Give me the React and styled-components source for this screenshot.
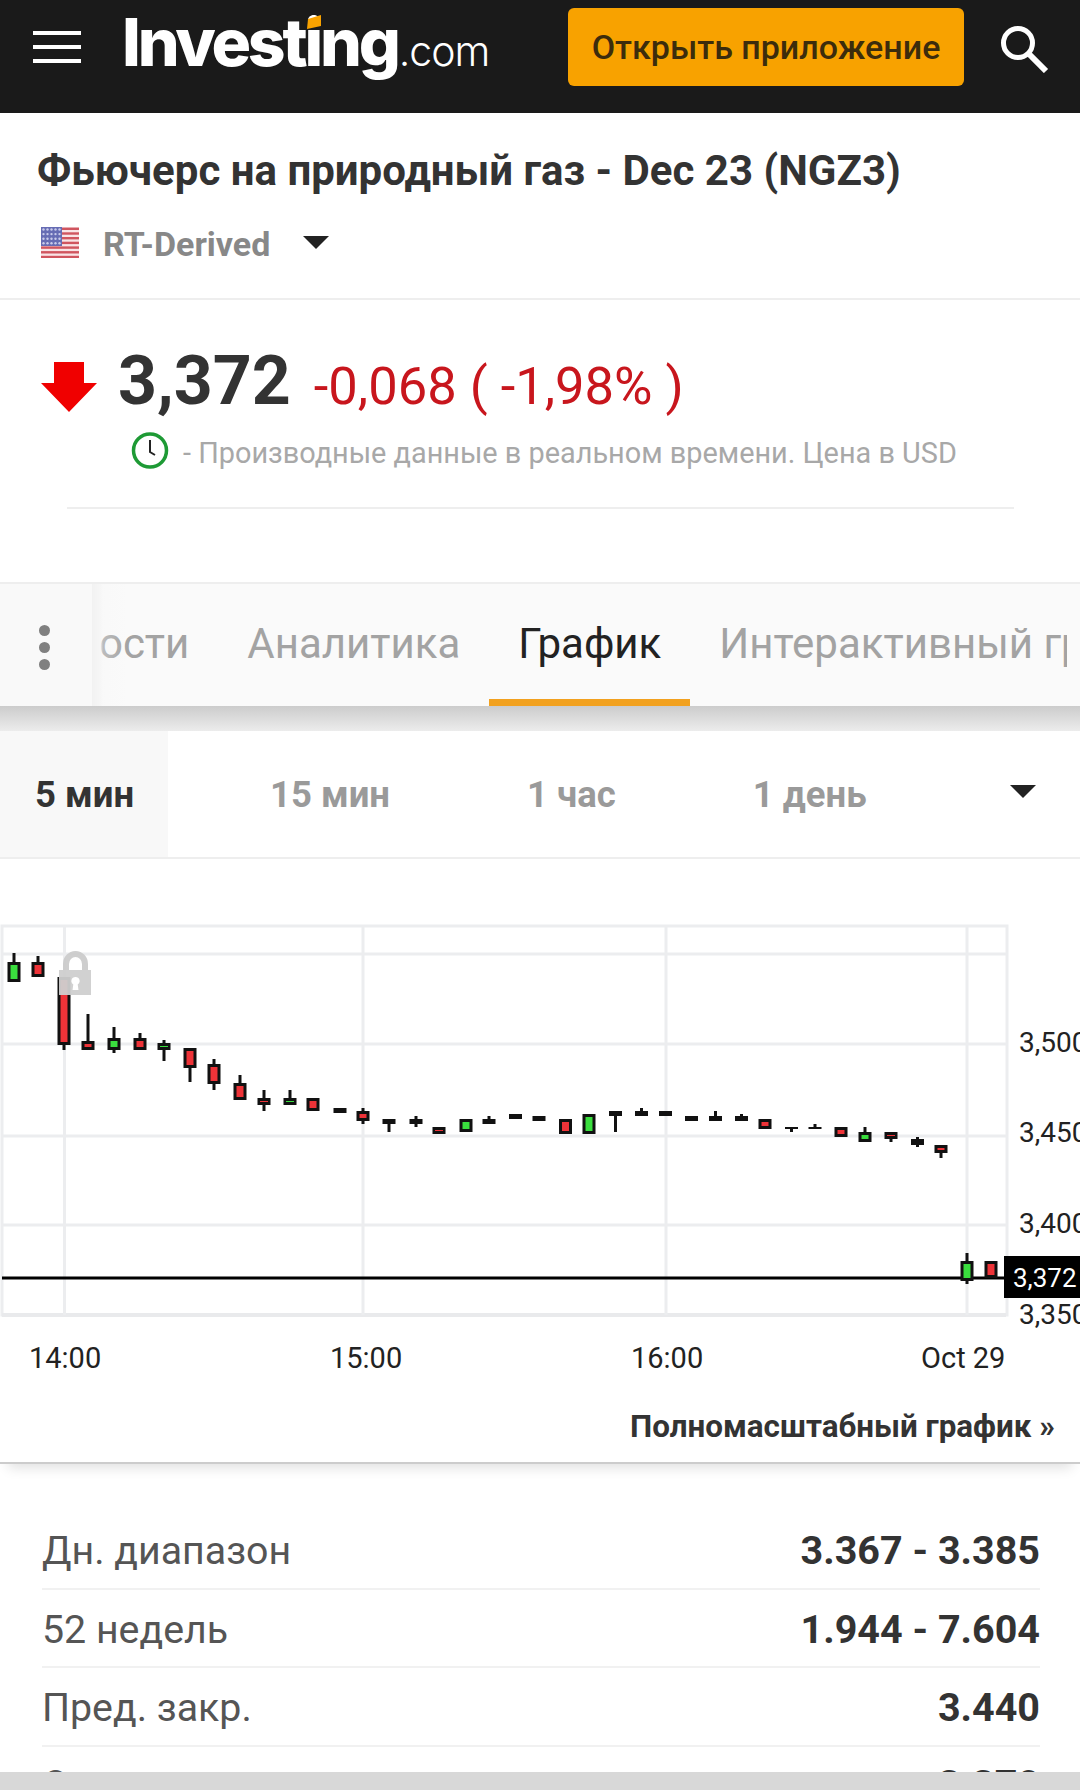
import React from 'react';
import styled, { createGlobalStyle } from 'styled-components';

const GlobalStyle = createGlobalStyle`
  html, body { margin: 0; padding: 0; background: #fff; }
  body { width: 1080px; height: 1790px; overflow: hidden; font-family: Roboto, "Liberation Sans", sans-serif; color: #333; }
  * { box-sizing: border-box; }
`;

const Page = styled.div`
  position: relative;
  width: 1080px;
  height: 1790px;
  overflow: hidden;
`;

const Header = styled.header`
  display: flex;
  align-items: flex-start;
  height: 113px;
  padding: 8px 31px 0 33px;
  background: #1a1a1a;
`;

const Burger = styled.div`
  display: flex;
  flex-direction: column;
  gap: 10px;
  width: 48px;
  margin-top: 23px;
  span { display: block; height: 4px; background: #fff; }
`;

const Logo = styled.div`
  position: relative;
  display: flex;
  align-items: baseline;
  margin-left: 41px;
  height: 90px;
  line-height: 69px;
  color: #fff;
  font-family: Inter, Roboto, sans-serif;
`;

const LogoMain = styled.span`
  font-size: 66px;
  font-weight: 800;
  letter-spacing: -3.2px;
`;

const LogoCom = styled.span`
  margin-left: 1px;
  font-size: 41px;
  font-weight: 300;
  letter-spacing: -1px;
`;

const LogoAccent = styled.svg`
  position: absolute;
  left: 185px;
  top: 7px;
`;

const AppButton = styled.button`
  width: 396px;
  height: 78px;
  margin-left: auto;
  border: 0;
  border-radius: 6px;
  background: #f8a200;
  color: #3c2c0c;
  font-family: inherit;
  font-size: 34px;
  font-weight: 500;
  white-space: nowrap;
`;

const SearchIcon = styled.svg`
  margin: 17px 0 0 36px;
`;

const TitleBlock = styled.section`
  height: 187px;
  padding: 34px 0 0 37px;
  border-bottom: 2px solid #eee;
`;

const Title = styled.h1`
  margin: 0;
  font-size: 42px;
  line-height: 48px;
  font-weight: 700;
  color: #333;
  white-space: nowrap;
`;

const ExchangeRow = styled.div`
  display: flex;
  align-items: center;
  margin: 32px 0 0 4px;
  height: 30px;
`;

const Exchange = styled.span`
  margin: 3px 0 0 24px;
  font-size: 34px;
  font-weight: 700;
  color: #888;
`;

const Caret = styled.span`
  display: block;
  width: 0;
  height: 0;
  margin-left: ${p => p.$gap || 0}px;
  border-left: ${p => p.$half}px solid transparent;
  border-right: ${p => p.$half}px solid transparent;
  border-top: 13px solid #222;
`;

const QuoteBlock = styled.section`
  height: 282px;
  padding-top: 45px;
`;

const PriceRow = styled.div`
  display: flex;
  align-items: baseline;
  height: 72px;
  padding-left: 41px;
`;

const DownArrow = styled.svg`
  align-self: flex-start;
  margin-top: 17px;
`;

const Price = styled.span`
  margin-left: 21px;
  font-size: 68px;
  line-height: 72px;
  font-weight: 700;
  color: #333;
`;

const Change = styled.span`
  margin-left: 23px;
  font-size: 52.5px;
  line-height: 72px;
  color: #c8161d;
`;

const Note = styled.div`
  display: flex;
  align-items: center;
  margin: 15px 0 0 131px;
  height: 36px;
  font-size: 28.87px;
  color: #a8a8a8;
  white-space: nowrap;
  svg { margin-right: 14px; }
  span { padding-top: 6px; }
`;

const Rule = styled.div`
  margin: 39px 66px 0 67px;
  height: 2px;
  background: #eee;
`;

const TabStrip = styled.nav`
  position: relative;
  height: 124px;
  overflow: hidden;
  border-top: 2px solid #eee;
  background: #fafafa;
`;

const TabViewport = styled.div`
  width: 1067px;
  overflow: hidden;
`;

const TabRow = styled.div`
  display: flex;
  margin-left: ${p => p.$shift}px;
`;

const Tab = styled.div`
  flex: none;
  height: 122px;
  padding: 33px 29px 0;
  font-size: 42px;
  line-height: 54px;
  white-space: nowrap;
  color: ${p => (p.$active ? '#222' : '#a3a3a3')};
  border-bottom: 7px solid ${p => (p.$active ? '#f2a11f' : 'transparent')};
`;

const SideButton = styled.div`
  position: absolute;
  left: 0;
  top: 0;
  width: 92px;
  height: 122px;
  display: flex;
  flex-direction: column;
  gap: 6px;
  padding: 41px 0 0 39px;
  background: #f9f9f9;
  span { display: block; width: 11px; height: 11px; border-radius: 50%; background: #808080; }
  &::after {
    content: '';
    position: absolute;
    left: 100%;
    top: 0;
    bottom: 0;
    width: 36px;
    background: linear-gradient(to right, #f2f2f2 0, #f6f6f6 8px, rgba(246, 246, 246, 0.3) 11px, rgba(250, 250, 250, 0) 100%);
  }
`;

const TabShadow = styled.div`
  height: 25px;
  background: linear-gradient(#cccccc, #ececec);
`;

const RangeRow = styled.div`
  display: flex;
  height: 128px;
  border-bottom: 2px solid #eee;
  font-size: 36.5px;
  font-weight: 700;
  line-height: 128px;
`;

const ActiveRange = styled.div`
  flex: none;
  width: 168px;
  padding-left: 35px;
  background: #f8f8f8;
  color: #333;
`;

const RangeList = styled.div`
  display: flex;
  gap: 137px;
  margin-left: 102px;
`;

const Range = styled.div`
  color: #9a9a9a;
`;

const RangeCaret = styled.div`
  margin: 54px 0 0 auto;
  padding-right: 44px;
`;

const ChartCard = styled.section`
  position: relative;
  height: 605px;
  border-bottom: 2px solid #ccc;
  box-shadow: 0 12px 12px -8px rgba(0, 0, 0, 0.12);
`;

const Canvas = styled.div`
  position: relative;
  width: 1080px;
  height: 540px;
  overflow: hidden;
`;

const AxisY = styled.span`
  position: absolute;
  left: 1019px;
  font-size: 28px;
  line-height: 32px;
  color: #222;
`;

const PriceTag = styled.span`
  position: absolute;
  left: 1004px;
  top: 397px;
  width: 76px;
  height: 42px;
  padding-left: 9px;
  background: #000;
  color: #fff;
  font-size: 26px;
  line-height: 44px;
`;

const AxisX = styled.span`
  position: absolute;
  top: 483px;
  font-size: 29px;
  line-height: 32px;
  color: #222;
`;

const FullLink = styled.div`
  padding: 8px 25px 0 0;
  text-align: right;
  font-size: 31.4px;
  font-weight: 700;
  line-height: 40px;
  color: #333;
`;

const Stats = styled.section`
  margin: 0 40px 0 42px;
  padding-top: 47px;
`;

const StatRow = styled.div`
  display: flex;
  justify-content: space-between;
  height: 78.5px;
  padding-top: ${p => (p.$tight ? 14 : 16)}px;
  border-bottom: 2px solid #f1f1f1;
  line-height: 48px;
`;

const StatLabel = styled.span`
  font-size: 39.3px;
  color: #555;
`;

const StatValue = styled.span`
  font-size: 39.5px;
  font-weight: 700;
  color: #333;
`;

const BottomBar = styled.div`
  position: absolute;
  left: 0;
  right: 0;
  bottom: 0;
  height: 18px;
  background: #d8d8d8;
`;

// x, wick top, body top, body bottom, wick bottom, colour (g/r/k)
const CANDLES = [
  [14, 953, 962, 982, 982, 'g'], [38, 956, 962, 977, 977, 'r'], [64, 977, 977, 1045, 1050, 'r'],
  [88, 1014, 1041, 1050, 1050, 'r'], [114, 1027, 1038, 1050, 1053, 'g'], [140, 1033, 1038, 1050, 1050, 'r'],
  [164, 1040, 1043, 1050, 1061, 'g'], [190, 1048, 1048, 1068, 1082, 'r'], [214, 1059, 1064, 1084, 1090, 'r'],
  [240, 1075, 1083, 1100, 1100, 'r'], [264, 1090, 1098, 1105, 1111, 'r'], [290, 1090, 1098, 1105, 1105, 'g'],
  [313, 1098, 1098, 1111, 1111, 'r'], [340, 1108, 1108, 1113, 1113, 'k'], [363, 1108, 1111, 1121, 1124, 'r'],
  [389, 1119, 1119, 1124, 1132, 'k'], [416, 1116, 1119, 1124, 1127, 'k'], [439, 1127, 1127, 1134, 1134, 'r'],
  [466, 1119, 1119, 1132, 1132, 'g'], [489, 1116, 1119, 1124, 1124, 'k'], [515.5, 1114, 1114, 1119, 1119, 'k'],
  [539, 1116, 1116, 1121, 1121, 'k'], [565.5, 1119, 1119, 1134, 1134, 'r'], [589, 1114, 1114, 1134, 1134, 'g'],
  [615.5, 1111, 1111, 1116, 1132, 'k'], [641.5, 1108, 1111, 1116, 1116, 'k'], [665.5, 1111, 1111, 1116, 1116, 'k'],
  [691.5, 1116, 1116, 1121, 1121, 'k'], [715.5, 1111, 1116, 1121, 1121, 'k'], [741.5, 1114, 1116, 1121, 1121, 'k'],
  [765, 1119, 1119, 1129, 1129, 'r'], [791.5, 1127, 1127, 1129, 1132, 'k'], [815, 1124, 1127, 1129, 1129, 'k'],
  [841, 1127, 1127, 1137, 1137, 'r'], [865, 1127, 1132, 1142, 1142, 'g'], [891, 1132, 1132, 1139, 1142, 'r'],
  [917.5, 1137, 1139, 1145, 1147, 'k'], [941, 1145, 1145, 1153, 1158, 'r'], [967, 1253, 1261, 1281, 1284, 'g'],
  [991, 1261, 1261, 1278, 1278, 'r'],
];

const FILL = { g: '#3ade3e', r: '#ee3338' };
const GRID_X = [64.5, 363, 666, 967];
const GRID_Y = [954, 1044, 1136, 1225];

function Candle({ c }) {
  const [x, wt, bt, bb, wb, kind] = c;
  return (
    <g>
      <line x1={x} x2={x} y1={wt} y2={wb} stroke="#111" strokeWidth="3" />
      {kind === 'k'
        ? <rect x={x - 6.5} y={bt} width="13" height={bb - bt} fill="#111" />
        : <rect x={x - 5} y={bt + 1.5} width="10" height={bb - bt - 3} fill={FILL[kind]} stroke="#111" strokeWidth="3" />}
    </g>
  );
}

function CandleChart() {
  return (
    <svg width="1080" height="540" viewBox="0 859 1080 540">
      <rect x="2" y="926" width="1005" height="389" fill="#fff" stroke="#ecedef" strokeWidth="3" />
      <line x1="2" x2="1006" y1="1315" y2="1315" stroke="#e9eaec" strokeWidth="4" />
      {GRID_X.map(x => <line key={x} x1={x} x2={x} y1="926" y2="1315" stroke="#ecedef" strokeWidth="3" />)}
      {GRID_Y.map(y => <line key={y} x1="2" x2="1006" y1={y} y2={y} stroke="#ecedef" strokeWidth="3" />)}
      <line x1="2" x2="1006" y1="1278" y2="1278" stroke="#000" strokeWidth="3" />
      {CANDLES.map(c => <Candle key={c[0]} c={c} />)}
      <g opacity="0.95">
        <path d="M66 971v-6a9.5 10 0 0 1 19 0v6" fill="none" stroke="#ccc" strokeWidth="6" transform="translate(0 -1)" />
        <rect x="59" y="970" width="32" height="25" fill="#cfcfcf" />
        <path d="M75.5 977a4 4 0 0 1 2.2 7.4l.8 5.6h-6l.8-5.6a4 4 0 0 1 2.2-7.4z" fill="#fff" />
      </g>
    </svg>
  );
}

function UsFlag() {
  const dots = [];
  for (let row = 0; row < 4; row++) {
    for (let col = 0; col < 5; col++) {
      dots.push(<circle key={`${row}-${col}`} cx={2.5 + col * 4} cy={2.5 + row * 4.6} r="1.2" fill="#c9cbea" />);
    }
  }
  return (
    <svg width="38" height="31" viewBox="0 0 38 31">
      <rect width="38" height="31" fill="#f9e4e6" />
      {[0, 1, 2, 3, 4, 5, 6].map(i => <rect key={i} y={i * 4.7 + 0.6} width="38" height="2.4" fill="#d0555f" />)}
      <rect width="21" height="19" fill="#666cb4" />
      {dots}
    </svg>
  );
}

export default function App() {
  return (
    <Page>
      <GlobalStyle />
      <Header>
        <Burger><span /><span /><span /></Burger>
        <Logo>
          <LogoMain>Investing</LogoMain>
          <LogoCom>.com</LogoCom>
          <LogoAccent width="14" height="14" viewBox="0 0 14 14">
            <path d="M1 4 14 0v11L0 14z" fill="#f8a200" />
          </LogoAccent>
        </Logo>
        <AppButton>Открыть приложение</AppButton>
        <SearchIcon width="49" height="48" viewBox="0 0 49 48">
          <circle cx="18" cy="18" r="14.5" fill="none" stroke="#fff" strokeWidth="5" />
          <path d="M28 28 46 46" stroke="#fff" strokeWidth="6" />
        </SearchIcon>
      </Header>

      <TitleBlock>
        <Title>Фьючерс на природный газ - Dec 23 (NGZ3)</Title>
        <ExchangeRow>
          <UsFlag />
          <Exchange>RT-Derived</Exchange>
          <Caret $half={13} $gap={33} />
        </ExchangeRow>
      </TitleBlock>

      <QuoteBlock>
        <PriceRow>
          <DownArrow width="56" height="50" viewBox="0 0 56 50">
            <path d="M13 0h30v21h13L28 50 0 21h13z" fill="#f00000" />
          </DownArrow>
          <Price>3,372</Price>
          <Change>-0,068 ( -1,98% )</Change>
        </PriceRow>
        <Note>
          <svg width="38" height="37" viewBox="0 0 38 37">
            <circle cx="19" cy="18.5" r="16.5" fill="none" stroke="#1e9a35" strokeWidth="3.5" />
            <path d="M19 8v12l5 3" fill="none" stroke="#222" strokeWidth="2" />
          </svg>
          <span>- Производные данные в реальном времени. Цена в USD</span>
        </Note>
        <Rule />
      </QuoteBlock>

      <TabStrip>
        <TabViewport>
          <TabRow $shift={-8}>
            <Tab>Новости</Tab>
            <Tab>Аналитика</Tab>
            <Tab $active>График</Tab>
            <Tab>Интерактивный график</Tab>
          </TabRow>
        </TabViewport>
        <SideButton><span /><span /><span /></SideButton>
      </TabStrip>
      <TabShadow />

      <RangeRow>
        <ActiveRange>5 мин</ActiveRange>
        <RangeList>
          <Range>15 мин</Range>
          <Range>1 час</Range>
          <Range>1 день</Range>
        </RangeList>
        <RangeCaret><Caret $half={13} /></RangeCaret>
      </RangeRow>

      <ChartCard>
        <Canvas>
          <CandleChart />
          <AxisY style={{ top: 168 }}>3,500</AxisY>
          <AxisY style={{ top: 258 }}>3,450</AxisY>
          <AxisY style={{ top: 349 }}>3,400</AxisY>
          <AxisY style={{ top: 440 }}>3,350</AxisY>
          <PriceTag>3,372</PriceTag>
          <AxisX style={{ left: 29 }}>14:00</AxisX>
          <AxisX style={{ left: 330 }}>15:00</AxisX>
          <AxisX style={{ left: 631 }}>16:00</AxisX>
          <AxisX style={{ left: 921 }}>Oct 29</AxisX>
        </Canvas>
        <FullLink>Полномасштабный график »</FullLink>
      </ChartCard>

      <Stats>
        <StatRow><StatLabel>Дн. диапазон</StatLabel><StatValue>3.367 - 3.385</StatValue></StatRow>
        <StatRow><StatLabel>52 недель</StatLabel><StatValue>1.944 - 7.604</StatValue></StatRow>
        <StatRow><StatLabel>Пред. закр.</StatLabel><StatValue>3.440</StatValue></StatRow>
        <StatRow $tight><StatLabel>Открытие</StatLabel><StatValue>3.370</StatValue></StatRow>
      </Stats>
      <BottomBar />
    </Page>
  );
}
